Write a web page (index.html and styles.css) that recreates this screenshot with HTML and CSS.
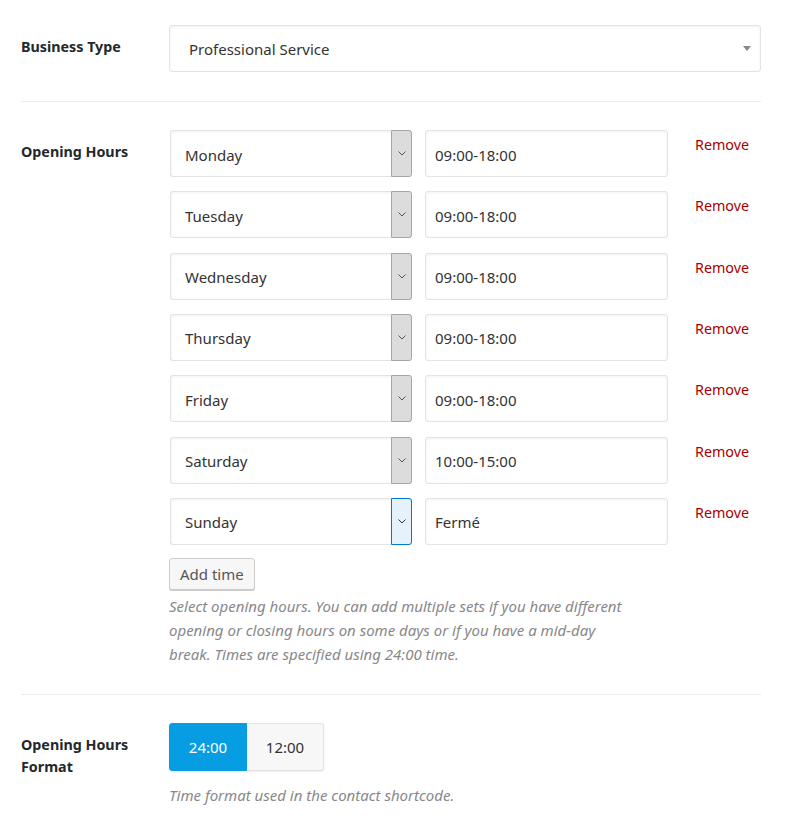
FILE: index.html
```html
<!DOCTYPE html>
<html lang="en">
<head>
<meta charset="utf-8">
<title>Settings</title>
<link rel="stylesheet" href="styles.css">
</head>
<body>
<div class="page">
  <div class="section first">
    <div class="label">Business Type</div>
    <div class="field">
      <div class="big-select">
        <span>Professional Service</span>
        <span class="tri"></span>
      </div>
    </div>
  </div>

  <div class="section">
    <div class="label">Opening Hours</div>
    <div class="field">
      <div class="rows">
        <div class="row">
          <div class="day"><span>Monday</span><span class="btn"><svg viewBox="0 0 8 5" width="8" height="5"><path d="M0.5 0.5 L4 4 L7.5 0.5" fill="none" stroke="#555" stroke-width="1"/></svg></span></div>
          <div class="time">09:00-18:00</div>
          <a class="remove" href="#">Remove</a>
        </div>
        <div class="row">
          <div class="day"><span>Tuesday</span><span class="btn"><svg viewBox="0 0 8 5" width="8" height="5"><path d="M0.5 0.5 L4 4 L7.5 0.5" fill="none" stroke="#555" stroke-width="1"/></svg></span></div>
          <div class="time">09:00-18:00</div>
          <a class="remove" href="#">Remove</a>
        </div>
        <div class="row">
          <div class="day"><span>Wednesday</span><span class="btn"><svg viewBox="0 0 8 5" width="8" height="5"><path d="M0.5 0.5 L4 4 L7.5 0.5" fill="none" stroke="#555" stroke-width="1"/></svg></span></div>
          <div class="time">09:00-18:00</div>
          <a class="remove" href="#">Remove</a>
        </div>
        <div class="row">
          <div class="day"><span>Thursday</span><span class="btn"><svg viewBox="0 0 8 5" width="8" height="5"><path d="M0.5 0.5 L4 4 L7.5 0.5" fill="none" stroke="#555" stroke-width="1"/></svg></span></div>
          <div class="time">09:00-18:00</div>
          <a class="remove" href="#">Remove</a>
        </div>
        <div class="row">
          <div class="day"><span>Friday</span><span class="btn"><svg viewBox="0 0 8 5" width="8" height="5"><path d="M0.5 0.5 L4 4 L7.5 0.5" fill="none" stroke="#555" stroke-width="1"/></svg></span></div>
          <div class="time">09:00-18:00</div>
          <a class="remove" href="#">Remove</a>
        </div>
        <div class="row">
          <div class="day"><span>Saturday</span><span class="btn"><svg viewBox="0 0 8 5" width="8" height="5"><path d="M0.5 0.5 L4 4 L7.5 0.5" fill="none" stroke="#555" stroke-width="1"/></svg></span></div>
          <div class="time">10:00-15:00</div>
          <a class="remove" href="#">Remove</a>
        </div>
        <div class="row">
          <div class="day"><span>Sunday</span><span class="btn active"><svg viewBox="0 0 8 5" width="8" height="5"><path d="M0.5 0.5 L4 4 L7.5 0.5" fill="none" stroke="#333" stroke-width="1"/></svg></span></div>
          <div class="time">Fermé</div>
          <a class="remove" href="#">Remove</a>
        </div>
      </div>
      <button class="add" type="button">Add time</button>
      <p class="help wide">Select opening hours. You can add multiple sets if you have different opening or closing hours on some days or if you have a mid-day break. Times are specified using 24:00 time.</p>
    </div>
  </div>

  <div class="section last">
    <div class="label">Opening Hours Format</div>
    <div class="field">
      <div class="toggle">
        <span class="opt on">24:00</span>
        <span class="opt">12:00</span>
      </div>
      <p class="help small">Time format used in the contact shortcode.</p>
    </div>
  </div>
</div>
</body>
</html>
```

FILE: styles.css
```css
html, body {
  margin: 0;
  padding: 0;
  background: #fff;
}
body {
  font-family: "Noto Sans", "Open Sans", sans-serif;
  font-size: 15px;
  color: #333;
}
.page {
  width: 740px;
  margin-left: 21px;
}
.section {
  display: flex;
  padding: 28px 0;
  border-bottom: 1px solid #ececec;
}
.section.first {
  padding-top: 25px;
  padding-bottom: 29px;
}
.section.last {
  border-bottom: none;
}
.label {
  width: 128px;
  flex: none;
  margin-right: 20px;
  padding-top: 11px;
  font-weight: 700;
  font-size: 14.3px;
  line-height: 22px;
  color: #23282d;
}
.field {
  flex: 1;
  min-width: 0;
}
.big-select {
  height: 47px;
  box-sizing: border-box;
  border: 1px solid #e3e3e3;
  border-radius: 3px;
  box-shadow: inset 0 1px 3px rgba(0,0,0,0.06);
  display: flex;
  align-items: center;
  justify-content: space-between;
  padding: 0 9px 0 19px;
  color: #333;
}
.tri {
  width: 0;
  height: 0;
  border-left: 4px solid transparent;
  border-right: 4px solid transparent;
  border-top: 5px solid #888;
}
.rows {
  display: flex;
  flex-direction: column;
  gap: 14.33px;
}
.row {
  display: flex;
  align-items: flex-start;
  padding-left: 1px;
}
.day {
  width: 242px;
  height: 47px;
  box-sizing: border-box;
  border: 1px solid #e3e3e3;
  border-right: none;
  border-radius: 3px;
  box-shadow: inset 0 1px 3px rgba(0,0,0,0.06);
  display: flex;
  align-items: stretch;
  justify-content: space-between;
  color: #333;
}
.day span:first-child {
  padding-left: 14px;
  padding-top: 2px;
  display: flex;
  align-items: center;
}
.btn {
  width: 21px;
  margin: -1px 0;
  box-sizing: border-box;
  background: #dcdcdc;
  border: 1px solid #a6a6a6;
  border-radius: 0 3px 3px 0;
  display: flex;
  align-items: center;
  justify-content: center;
}
.btn.active {
  background: #e5f1fb;
  border-color: #0078d7;
}
.time {
  width: 243px;
  height: 47px;
  margin-left: 13px;
  box-sizing: border-box;
  border: 1px solid #e3e3e3;
  border-radius: 3px;
  box-shadow: inset 0 1px 3px rgba(0,0,0,0.06);
  padding: 2px 9px 0;
  display: flex;
  align-items: center;
  color: #333;
}
.remove {
  margin-left: 27px;
  margin-top: 4px;
  font-size: 14.3px;
  line-height: 22px;
  color: #a00;
  text-decoration: none;
}
.add {
  display: block;
  margin-top: 13px;
  height: 32px;
  padding: 0 10px;
  font: inherit;
  color: #555;
  background: #f7f7f7;
  border: 1px solid #ccc;
  border-radius: 3px;
  box-shadow: 0 1px 0 #ccc;
  cursor: pointer;
}
.help {
  margin: 4px 0 0;
  font-style: italic;
  color: #888;
  line-height: 24px;
}
.help.wide {
  max-width: 465px;
}
.toggle {
  display: inline-flex;
  vertical-align: top;
  height: 48px;
  border-radius: 3px;
  box-shadow: 0 1px 2px rgba(0,0,0,0.08);
}
.opt {
  width: 77px;
  box-sizing: border-box;
  display: flex;
  align-items: center;
  justify-content: center;
  background: #f7f7f7;
  border: 1px solid #e2e2e2;
  border-left: none;
  border-radius: 0 3px 3px 0;
  color: #333;
}
.opt.on {
  width: 78px;
  background: #069de3;
  border: 1px solid #069de3;
  border-radius: 3px 0 0 3px;
  color: #fff;
}
.help.small {
  margin-top: 12px;
}
```
